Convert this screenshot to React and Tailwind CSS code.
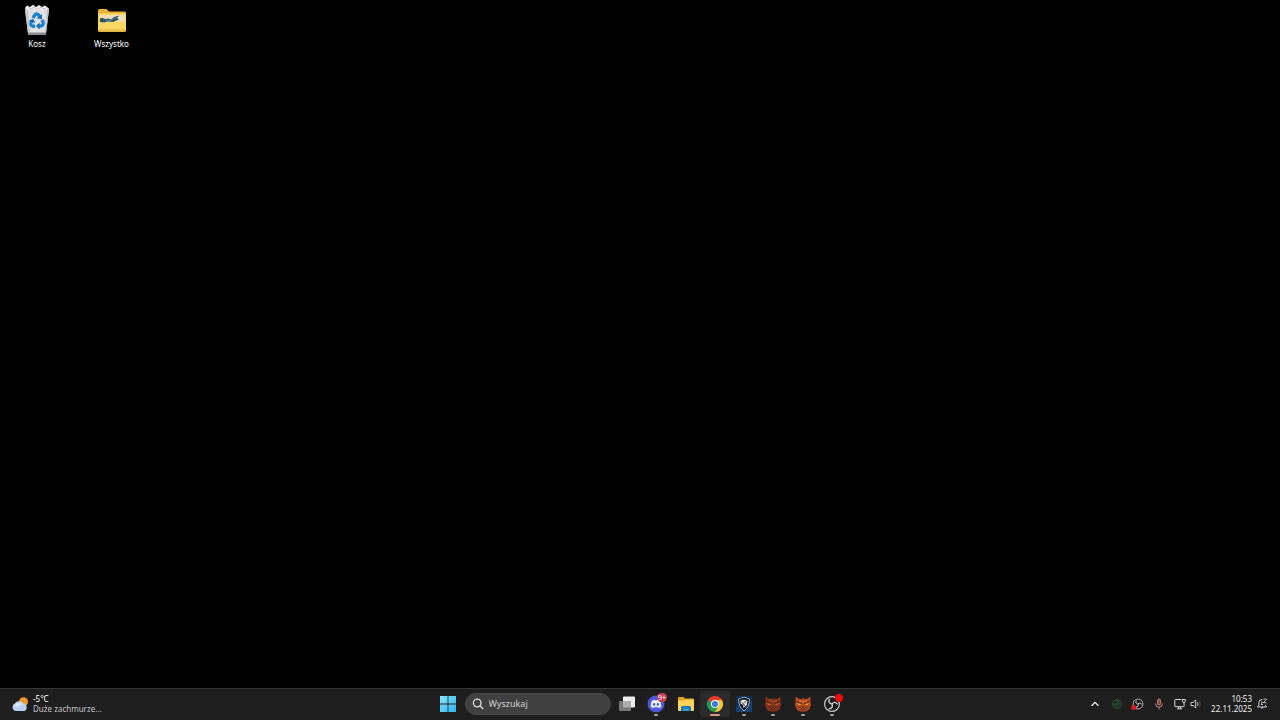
import React from "react";

const RecycleBin = () => (
  <svg viewBox="0 0 26 32" className="h-8 w-[26px]" aria-hidden="true">
    <path d="M1 4 L3 1.5 L6 3 L9 .8 L12 3 L15 1 L18 3 L21 1.5 L25 4.5 L23 8 L3 8Z" fill="#f4f2ef" />
    <path d="M4 3 L7 5 L10 3 L13 5.5 L17 3 L20 5 L23 3.5" fill="none" stroke="#b9b4ae" strokeWidth=".8" />
    <path d="M1 5.5 H25 L22 29.5 Q21.8 31 20 31 H6 Q4.2 31 4 29.5Z" fill="#dfe3e6" />
    <path d="M1 5.5 H4 L6.500 31 H6 Q4.200 31 4 29.500Z" fill="#c6cacd" />
    <path d="M25 5.500 H23 L20.500 31 Q21.800 31 22 29.500Z" fill="#bfc3c7" />
    <path d="M4.200 28.500 H22 L21.500 31 H5Z" fill="#8b8c8e" />
    <g fill="none" stroke="#1c83d3" strokeWidth="3.400">
      <path d="M9 14 L10.800 11 Q12.500 8.800 14.500 11 L15.700 13" />
      <path d="M18 15.800 L19 18 Q19.800 21.500 16.800 22 H14.500" />
      <path d="M11 22.300 H9.500 Q6 21.800 7 18.500 L8 17" />
    </g>
    <path d="M12.800 14.500 L18 15 L17.800 10Z M15.500 18.500 L12 22 L15.500 25.500Z M4.500 17 L9 14.800 L11.500 19Z" fill="#1668b5" />
  </svg>
);

const PictureFolder = () => (
  <svg viewBox="0 0 30 32" className="h-8 w-[30px]" aria-hidden="true">
    <path d="M1 6.500 Q1 5 2.500 5 H9.500 L12 7.500 H27.500 Q29 7.500 29 9 V14 H1Z" fill="#e9b43b" />
    <path d="M1 9.500 H29 V26 Q29 27.500 27.500 27.500 H2.500 Q1 27.500 1 26Z" fill="#fbd766" />
    <path d="M3 11 H28 V18.500 L14 19.500 L3 18.500Z" fill="#eedfbc" />
    <path d="M1 18.500 H11 L14 17.500 H29 V26 Q29 27.500 27.500 27.500 H2.500 Q1 27.500 1 26Z" fill="#fbd766" />
    <path d="M1 25 H29 V26 Q29 27.500 27.500 27.500 H2.500 Q1 27.500 1 26Z" fill="#f3c34c" />
    <path d="M3 14.500 L5 13.800 L8 15 L11 14.500 L14 15.500 L17 13 L22 11.500 L20 14 L22 15.500 L16 18 L11 17.500 L7 18.500 L3 18Z" fill="#36535a" />
    <path d="M8 16 L13 16.500 L17 14.500 L20 13" fill="none" stroke="#3f8ea8" />
  </svg>
);

const Weather = () => (
  <svg viewBox="0 0 18 16" className="h-4 w-[18px]" aria-hidden="true">
    <circle cx="12.500" cy="5.800" r="4.500" fill="#f39b29" />
    <path d="M4.500 15 A4 4 0 0 1 3.800 7.500 A5 5 0 0 1 12.500 7.500 A3.900 3.900 0 0 1 13.200 15Z" fill="#b9cff2" />
    <path d="M4 9 A4.500 4.500 0 0 1 11.500 8.500 Q8 8 7 11 Q5 9.500 2 11Z" fill="#e0eafb" />
  </svg>
);

const Windows = () => (
  <svg viewBox="0 0 16 16" className="size-4" aria-hidden="true">
    <defs>
      <linearGradient id="win" x1="0" y1="0" x2="1" y2="1" gradientUnits="objectBoundingBox">
        <stop offset="0" stopColor="#8be3fb" />
        <stop offset="1" stopColor="#2fb5ee" />
      </linearGradient>
    </defs>
    <path d="M0 0H7.600V7.600H0Z M8.400 0H16V7.600H8.400Z M0 8.400H7.600V16H0Z M8.400 8.400H16V16H8.400Z" fill="url(#win)" />
  </svg>
);

const TaskView = () => (
  <svg viewBox="0 0 18 16" className="h-4 w-[18px]" aria-hidden="true">
    <rect x="5" y="0.500" width="12" height="11" rx=".8" fill="#eeeeee" />
    <rect x="1" y="5" width="12" height="10" rx=".8" fill="#777777" />
    <path d="M5 5H13V11.500H5Z" fill="#adadad" />
  </svg>
);

const Discord = () => (
  <svg viewBox="0 0 20 20" className="size-5" aria-hidden="true">
    <circle cx="10" cy="10" r="8.500" fill="#5058e0" />
    <path d="M6.300 6.500 Q7.500 5.800 8.700 5.800 L9.100 6.500 H10.900 L11.300 5.800 Q12.500 5.800 13.700 6.500 Q15.500 9.200 15.400 12.800 Q13.900 14 12.400 14.100 L11.800 13.200 H8.200 L7.600 14.100 Q6.100 14 4.600 12.800 Q4.500 9.200 6.300 6.500Z" fill="#f2f3ff" />
    <ellipse cx="8.100" cy="10.500" rx="1.200" ry="1.400" fill="#5058e0" />
    <ellipse cx="11.900" cy="10.500" rx="1.200" ry="1.400" fill="#5058e0" />
  </svg>
);

const Explorer = () => (
  <svg viewBox="0 0 18 18" className="size-[18px]" aria-hidden="true">
    <path d="M1 3 Q1 2 2 2 H6.500 L8 3.500 H16 Q17 3.500 17 4.500 V7 H1Z" fill="#e3a21e" />
    <path d="M1 5.500 H7 L8.500 4.500 H16.500 Q17 4.500 17 5 V15 Q17 16 16 16 H2 Q1 16 1 15Z" fill="#fcd45b" />
    <path d="M4 16 V12.500 Q4 11 5.500 11 H12.500 Q14 11 14 12.500 V16Z" fill="#1678c2" />
    <path d="M6.500 13.500 H11.500 V16 H6.500Z" fill="#31a7bd" />
  </svg>
);

const Chrome = () => (
  <svg viewBox="0 0 18 18" className="size-[18px]" aria-hidden="true">
    <path d="M9 9 L2.070 5 A8 8 0 0 1 15.930 5Z" fill="#e33b2e" />
    <path d="M9 9 L15.930 5 A8 8 0 0 1 9 17Z" fill="#fcc934" />
    <path d="M9 9 L9 17 A8 8 0 0 1 2.070 5Z" fill="#229a4d" />
    <path d="M9 5 H15.930 L12.500 11Z" fill="#fcc934" />
    <path d="M2.070 5 L5.500 11 L9 9 L9 5 L15.930 5 L14 3Z" fill="#e33b2e" />
    <path d="M2.070 5 L5.540 11 L9 9Z" fill="#229a4d" />
    <path d="M12.460 11 L9 17 L7 12Z" fill="#229a4d" />
    <circle cx="9" cy="9" r="4" fill="#ffffff" />
    <circle cx="9" cy="9" r="3.100" fill="#3b7de8" />
  </svg>
);

const Shield = () => (
  <svg viewBox="0 0 18 18" className="size-[18px]" aria-hidden="true">
    <rect x="1" y="1" width="16" height="16" rx="1" fill="#122c55" />
    <path d="M1 12 L17 6 V17 H1Z" fill="#17426f" />
    <path d="M9 2 L14.500 4 Q14.500 12 9 16 Q3.500 12 3.500 4Z" fill="#0c1529" stroke="#9fabb5" />
    <path d="M5.500 5.500 L9 4.500 L12.500 6 L12 8.500 L12 10 L8.500 13 L8 10 L5.500 8.500Z" fill="#dcdfdf" />
    <path d="M8.500 6.500 L11 6 L10 9Z" fill="#b58b4b" />
    <path d="M7 7.500 L8.500 9 L9.500 11" fill="none" stroke="#1b2940" />
  </svg>
);

const Beast = ({ bright }) => (
  <svg viewBox="0 0 18 18" className="size-[18px]" aria-hidden="true">
    <path
      d="M1.500 1.500 L5.500 4 Q9 3 12.500 4 L16.500 1.500 L16.500 7 L17 10 L15.500 14 Q14 16 11 16.500 H7 Q4 16 2.500 14 L1 10 L1.500 7Z"
      fill={bright ? "#b5481e" : "#85321e"}
    />
    <path d="M2.500 8 L7.500 9.300 L5 10.200Z M15.500 8 L10.500 9.300 L13 10.200Z" fill={bright ? "#f5ae3e" : "#c8692e"} />
    <path d="M2.500 6.800 L8 8.300 M15.500 6.800 L10 8.300" stroke="#44180e" strokeWidth=".8" />
    <path d="M3.500 11.500 L6 12 L9 11.500 L12 12 L14.500 11.500 L12.500 14.500 H5.500Z" fill="#4a1a0f" />
    <path
      d="M4.500 12.300 L6 13.800 L7.500 12.300 L9 13.800 L10.500 12.300 L12 13.800 L13.500 12.300 M5 5.800 L9 7 L13 5.800"
      fill="none"
      stroke={bright ? "#e58b36" : "#bd5428"}
      strokeWidth=".9"
    />
  </svg>
);

const Obs = ({ className }) => (
  <svg viewBox="0 0 18 18" className={className} aria-hidden="true">
    <circle cx="9" cy="9" r="7.400" fill="#1c1c1f" stroke="#c9c9c9" strokeWidth="1.200" />
    <g fill="none" stroke="#d2d2d2" strokeWidth="1.400">
      <path d="M9 9 Q4.500 8.200 6.500 3.800" />
      <path d="M9 9 Q11.900 5.500 14.700 9.400" />
      <path d="M9 9 Q10.600 13.300 5.800 13.800" />
    </g>
  </svg>
);

const taskbarItems = [
  { name: "Widok zadań", icon: <TaskView /> },
  { name: "Discord", icon: <Discord />, running: true, count: "9+" },
  { name: "Eksplorator plików", icon: <Explorer /> },
  { name: "Google Chrome", icon: <Chrome />, active: true },
  { name: "Tarcza", icon: <Shield />, running: true },
  { name: "Gra 1", icon: <Beast />, running: true },
  { name: "Gra 2", icon: <Beast bright />, running: true },
  { name: "OBS Studio", icon: <Obs className="size-[18px]" />, running: true, recording: true },
];

const TaskbarButton = ({ item }) => (
  <button
    aria-label={item.name}
    className={`relative flex h-[26px] items-center justify-center rounded-sm ${item.active ? "bg-[#2b2b2b]" : ""}`}
  >
    {item.icon}
    {item.count && (
      <span className="absolute top-[2px] right-1 flex h-[9px] w-[10px] items-center justify-center rounded-full bg-[#c93e4d] text-[7px] leading-none text-white">
        {item.count}
      </span>
    )}
    {item.recording && <span className="absolute top-[3px] right-1 size-2 rounded-full bg-[#f00710]" />}
    {item.running && <span className="absolute bottom-px h-[2px] w-1 rounded-full bg-[#a0a0a0]" />}
    {item.active && <span className="absolute bottom-px h-[2px] w-[10px] rounded-full bg-[#d8937c]" />}
  </button>
);

const Tray = () => (
  <div className="flex h-full items-center justify-self-end pr-3">
    <button aria-label="Pokaż ukryte ikony" className="flex w-[22px] justify-center">
      <svg viewBox="0 0 12 12" className="size-3" fill="none" stroke="#eeeeee" strokeWidth="1.300">
        <path d="M2.500 7.800 L6 4.300 L9.500 7.800" />
      </svg>
    </button>
    <button aria-label="Stan" className="flex w-[21px] justify-center">
      <svg viewBox="0 0 12 12" className="size-3" fill="none" stroke="#28563b">
        <circle cx="6" cy="6" r="4.300" fill="#1b3022" />
        <path d="M3.500 7.500 L8 3 M5 8.500 L8.500 5" />
      </svg>
    </button>
    <button aria-label="OBS" className="relative flex w-[21px] justify-center">
      <Obs className="size-3" />
      <span className="absolute bottom-0 left-1 size-[5px] rounded-full bg-[#e01624]" />
    </button>
    <button aria-label="Mikrofon" className="flex w-[21px] justify-center">
      <svg viewBox="0 0 12 12" className="size-3" fill="none" stroke="#c08273">
        <rect x="4.500" y="1" width="3" height="6" rx="1.500" fill="#7c4c42" />
        <path d="M2.700 5.500 V6 A3.300 3.300 0 0 0 9.300 6 V5.500 M6 9.300 V11.500" />
      </svg>
    </button>
    <button aria-label="Sieć i głośność" className="flex items-center gap-1 pr-1 pl-[5px]">
      <svg viewBox="0 0 12 12" className="size-3" fill="none" stroke="#d8d8d8">
        <path d="M7.500 1.500 H1.500 Q.8 1.500 .8 2.200 V8 Q.8 8.700 1.500 8.700 H9.500 Q10.200 8.700 10.200 8 V6.500 M3 10.800 H8 M4.500 9 V10.500 M6.500 9 V10.500" />
        <path d="M8.500 1.500 H11.300 V3.500 Q11.300 4.500 10 4.500 Q8.500 4.500 8.500 3.500Z M10 4.500 V6.500" />
      </svg>
      <svg viewBox="0 0 12 12" className="size-3" fill="none" stroke="#d8d8d8" strokeWidth=".9">
        <path d="M1 4.500 H3 L5.800 2 V10 L3 7.500 H1Z M7.500 4.300 Q8.800 6 7.500 7.700" />
        <path d="M9.300 2.800 Q11.500 6 9.300 9.200" stroke="#555555" />
      </svg>
    </button>
    <button className="w-[46px] text-right text-[8px] leading-[10px] text-[#eeeeee]">
      <span className="block">10:53</span>
      <span className="block">22.11.2025</span>
    </button>
    <button aria-label="Powiadomienia" className="ml-1 flex">
      <svg viewBox="0 0 12 12" className="size-3" fill="none" stroke="#d8d8d8">
        <path d="M6 1.500 Q2.800 1.500 2.800 4.800 V6.800 L1.500 9 H10.500 L9.200 7 M4.800 9.300 Q6 11.500 7.200 9.300" />
        <path d="M7.300 1.200 H10.500 L7.300 4.700 H10.500 M5 4 H6.500 L5 6.500 H7" strokeWidth=".8" />
      </svg>
    </button>
  </div>
);

export default function App() {
  return (
    <div className="flex min-h-screen flex-col bg-black font-['Noto_Sans','Open_Sans',sans-serif] text-white">
      <main className="flex flex-1 items-start">
        <button className="flex w-[74px] flex-col items-center gap-[2px] pt-1 text-[8px] leading-3">
          <RecycleBin />
          Kosz
        </button>
        <button className="flex w-[75px] flex-col items-center gap-[2px] pt-1 text-[8px] leading-3">
          <PictureFolder />
          Wszystko
        </button>
      </main>
      <footer className="grid h-8 grid-cols-[1fr_auto_1fr] items-center border-t border-[#353535] bg-[#1e1e1e] pb-[2px]">
        <button className="flex items-center gap-1 justify-self-start pl-[11px] text-left text-[8px] leading-[10px]">
          <Weather />
          <span>
            <span className="block">-5°C</span>
            <span className="block text-[#c4c4c4]">Duże zachmurze...</span>
          </span>
        </button>
        <div className="flex items-center">
          <button aria-label="Start" className="flex h-[26px] w-7 items-center justify-center">
            <Windows />
          </button>
          <label className="mr-[2px] ml-[3px] flex h-[22px] w-[146px] items-center gap-[5px] rounded-full border border-[#484848] bg-[#404040] px-[6px]">
            <svg viewBox="0 0 12 12" className="size-3 shrink-0" fill="none" stroke="#e0e0e0" strokeWidth="1.300" aria-hidden="true">
              <circle cx="5.200" cy="5" r="3.800" />
              <path d="M8 7.800 L11.200 11" />
            </svg>
            <input
              type="text"
              aria-label="Wyszukaj"
              placeholder="Wyszukaj"
              className="w-full min-w-0 bg-transparent text-[9px] leading-3 outline-none placeholder:text-[#d0d0d0]"
            />
          </label>
          <nav className="grid w-[234px] grid-cols-8">
            {taskbarItems.map((item) => (
              <TaskbarButton key={item.name} item={item} />
            ))}
          </nav>
        </div>
        <Tray />
      </footer>
    </div>
  );
}
